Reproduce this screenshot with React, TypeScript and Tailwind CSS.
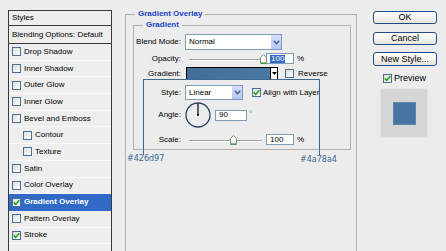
import React from "react";

const styleItems: { label: string; checked?: boolean; indent?: boolean; selected?: boolean }[] = [
  { label: "Drop Shadow" },
  { label: "Inner Shadow" },
  { label: "Outer Glow" },
  { label: "Inner Glow" },
  { label: "Bevel and Emboss" },
  { label: "Contour", indent: true },
  { label: "Texture", indent: true },
  { label: "Satin" },
  { label: "Color Overlay" },
  { label: "Gradient Overlay", checked: true, selected: true },
  { label: "Pattern Overlay" },
  { label: "Stroke", checked: true },
];

function CheckBox({ checked }: { checked?: boolean }) {
  return (
    <span className="flex h-[9px] w-[9px] shrink-0 items-center justify-center border border-[#4b6f99] bg-linear-to-br from-[#dcdcd6] to-white">
      {checked && (
        <svg width="7" height="7" viewBox="0 0 7 7">
          <path d="M0.8 3.4 L2.7 5.4 L6.3 1.2" fill="none" stroke="#21a121" strokeWidth="1.6" />
        </svg>
      )}
    </span>
  );
}

function Chevron() {
  return (
    <span className="flex h-full w-[11px] shrink-0 items-center justify-center border-l border-white bg-linear-to-b from-[#d2defc] to-[#b4c8f5]">
      <svg width="7" height="5" viewBox="0 0 7 5">
        <path d="M0.8 0.8 L3.5 3.6 L6.2 0.8" fill="none" stroke="#4d6185" strokeWidth="1.5" />
      </svg>
    </span>
  );
}

function Select({ value, width }: { value: string; width: string }) {
  return (
    <div className={`flex h-full items-stretch border border-[#7f9db9] bg-white ${width}`}>
      <span className="flex flex-1 items-center pl-[3px]">{value}</span>
      <Chevron />
    </div>
  );
}

function Thumb() {
  return (
    <svg width="7" height="10" viewBox="0 0 7 10">
      <path d="M0.5 3.5 L3.5 0.5 L6.5 3.5 V9.5 H0.5 Z" fill="#fbfbf8" stroke="#7d8a7d" />
      <path d="M1 9 H6" stroke="#21a121" strokeWidth="1.2" />
    </svg>
  );
}

function Slider({ pos }: { pos: number }) {
  return (
    <div className="relative h-full w-[81px]">
      <div className="absolute left-[4px] right-[4px] top-1/2 h-[2px] border-t border-[#a0a0a0] border-b-white border-b" />
      <div className="absolute top-[1px]" style={{ left: pos }}>
        <Thumb />
      </div>
    </div>
  );
}

function NumBox({ value, selected, width = "w-[28px]" }: { value: string; selected?: boolean; width?: string }) {
  return (
    <div className={`flex h-[11px] items-center border border-[#7f9db9] bg-white pl-[3px] ${width}`}>
      {selected ? <span className="bg-[#316ac5] px-[1px] text-white">{value}</span> : <span>{value}</span>}
    </div>
  );
}

function Row({ label, className, children }: { label: string; className: string; children: React.ReactNode }) {
  return (
    <div className={`flex items-center ${className}`}>
      <span className="w-[48px] shrink-0 pr-[1px] text-right">{label}</span>
      <div className="ml-[3px] flex h-full items-center">{children}</div>
    </div>
  );
}

function Button({ label, h = "h-[13px]" }: { label: string; h?: string }) {
  return (
    <button
      type="button"
      className={`flex w-[64px] items-center justify-center rounded-[3px] border border-[#1f4d85] bg-linear-to-b from-white to-[#e6e5dd] text-[9px] leading-none text-black ${h}`}
    >
      {label}
    </button>
  );
}

export default function App() {
  return (
    <div className="relative h-[251px] w-[446px] overflow-hidden bg-[#ececec] font-['Liberation_Sans',Arial,sans-serif] text-[8px] leading-none text-black">
      <div className="flex pl-[8px] pt-[10px]">
        {/* styles list */}
        <div className="flex h-[245px] w-[104px] shrink-0 flex-col border-x border-t border-[#3a3a3a] bg-[#eeeeee]">
          <div className="flex h-[15px] items-center border-b border-[#3a3a3a] pl-[3px]">Styles</div>
          <div className="flex h-[18px] items-center border-b border-[#3a3a3a] pl-[3px]">Blending Options: Default</div>
          {styleItems.map((it) => (
            <div
              key={it.label}
              className={`flex h-[16.7px] items-center gap-[3px] border-b ${
                it.selected ? "border-[#3169c6] bg-[#3169c6] font-bold text-white" : "border-[#fafafa]"
              } ${it.indent ? "pl-[14px]" : "pl-[3px]"}`}
            >
              <CheckBox checked={it.checked} />
              <span>{it.label}</span>
            </div>
          ))}
          <div className="flex-1" />
        </div>

        {/* gradient overlay group */}
        <fieldset className="ml-[13px] h-[260px] w-[232px] shrink-0 border border-[#b2b0a8]">
          <legend className="ml-[9px] px-[3px] font-bold text-[#1a44c4]">Gradient Overlay</legend>
          <fieldset className="ml-[7px] mt-[3px] h-[129px] w-[218px] border border-[#b2b0a8]">
            <legend className="ml-[9px] px-[3px] font-bold text-[#1a44c4]">Gradient</legend>
            <div className="flex flex-col pt-[5px]">
              <Row label="Blend Mode:" className="h-[16px]">
                <Select value="Normal" width="w-[97px]" />
              </Row>
              <Row label="Opacity:" className="mt-[3px] h-[11px]">
                <Slider pos={75} />
                <NumBox value="100" selected />
                <span className="ml-[3px]">%</span>
              </Row>
              <Row label="Gradient:" className="mt-[3px] h-[13px]">
                <div className="ml-[1px] flex h-full border border-black">
                  <div className="h-full w-[83px] bg-linear-to-r from-[#426d97] to-[#4a78a4]" />
                  <div className="flex h-full w-[7px] items-center justify-center border-l border-black bg-white">
                    <svg width="5" height="3" viewBox="0 0 5 3">
                      <path d="M0 0 H5 L2.5 3 Z" fill="#000" />
                    </svg>
                  </div>
                </div>
                <span className="ml-[7px]">
                  <CheckBox />
                </span>
                <span className="ml-[4px]">Reverse</span>
              </Row>
              <Row label="Style:" className="mt-[5px] h-[15px]">
                <Select value="Linear" width="w-[58px]" />
                <span className="ml-[9px]">
                  <CheckBox checked />
                </span>
                <span className="ml-[2px]">Align with Layer</span>
              </Row>
              <Row label="Angle:" className="mt-[2px] h-[26px]">
                <svg width="26" height="26" viewBox="0 0 26 26">
                  <circle cx="13" cy="13" r="12" fill="none" stroke="#2b4266" strokeWidth="1.3" />
                  <path d="M13 13 V1.5" stroke="#000" strokeWidth="1.2" />
                  <circle cx="13" cy="13" r="1" fill="#000" />
                </svg>
                <span className="ml-[4px]">
                  <NumBox value="90" width="w-[32px]" />
                </span>
                <span className="ml-[2px] self-start pt-[8px] text-[#777]">°</span>
              </Row>
              <Row label="Scale:" className="mt-[6px] h-[11px]">
                <Slider pos={45} />
                <NumBox value="100" />
                <span className="ml-[3px]">%</span>
              </Row>
            </div>
          </fieldset>
        </fieldset>

        {/* buttons */}
        <div className="ml-[16px] flex w-[64px] shrink-0 flex-col">
          <div className="mt-[1px]">
            <Button label="OK" />
          </div>
          <div className="mt-[8px]">
            <Button label="Cancel" />
          </div>
          <div className="mt-[7px]">
            <Button label="New Style..." h="h-[14px]" />
          </div>
          <div className="mt-[8px] flex h-[9px] items-center pl-[10px] text-[9px]">
            <CheckBox checked />
            <span className="ml-[2px]">Preview</span>
          </div>
          <div className="ml-[7px] mt-[5px] flex h-[50px] w-[48px] items-center justify-center border border-[#e4e4e4] bg-[#d5d5d5]">
            <div className="h-[23px] w-[23px] border border-[#5d86ae] bg-[#4874a1]" />
          </div>
        </div>
      </div>

      {/* annotation callouts */}
      <div className="pointer-events-none absolute left-[143px] top-[79px] h-[76px] w-[177px] border-x border-t border-[#42688f]" />
      <span className="absolute left-[127px] top-[155px] font-['DejaVu_Sans',sans-serif] text-[8px] text-[#3a6594]">#426d97</span>
      <span className="absolute left-[300px] top-[156px] font-['DejaVu_Sans',sans-serif] text-[8px] text-[#3a6594]">#4a78a4</span>
    </div>
  );
}
